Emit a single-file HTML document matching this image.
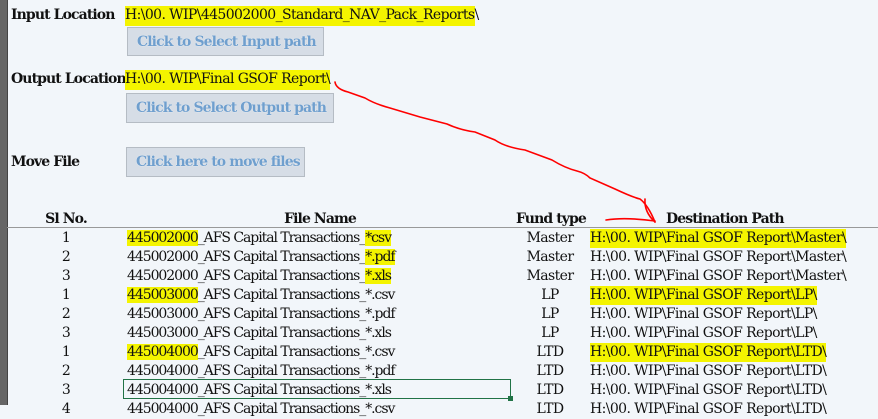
<!DOCTYPE html>
<html><head><meta charset="utf-8"><style>
body{margin:0;width:878px;height:405px;overflow:hidden;background:#f2f6fa;position:relative;font-family:"DejaVu Serif","Liberation Serif",serif;color:#111}
.a{position:absolute;white-space:nowrap;font-size:14px;line-height:19px;letter-spacing:-0.6px}
.b{font-weight:bold;letter-spacing:-0.9px}
.fn{letter-spacing:-1.05px}
.hl{background:#f4f400}
.btn{position:absolute;white-space:nowrap;overflow:hidden;background:#d6dde6;border:1px solid #b5bcc4;color:#6f9fce;font-weight:bold;font-size:14px;line-height:28px;padding-left:9px;box-sizing:border-box;letter-spacing:-0.9px;text-shadow:0 0 1px #fff}
.strip{position:absolute;left:0;top:0;width:7px;height:405px;background:#666;border-right:1px solid #444}
.c{text-align:center}
</style></head><body>
<div class="strip"></div>
<div class="a b" style="left:11px;top:6px">Input Location</div>
<div class="a hl" style="left:125px;top:6px;width:350px;height:20px">H:\00. WIP\445002000_Standard_NAV_Pack_Reports\</div>
<div class="btn" style="left:127px;top:27px;width:197px;height:29px">Click to Select Input path</div>
<div class="a b" style="left:11px;top:70px">Output Location</div>
<div class="a hl" style="left:125px;top:70px;width:205px;height:20px">H:\00. WIP\Final GSOF Report\</div>
<div class="btn" style="left:126px;top:93px;width:208px;height:30px">Click to Select Output path</div>
<div class="a b" style="left:11px;top:153px">Move File</div>
<div class="btn" style="left:126px;top:147px;width:179px;height:30px">Click here to move files</div>
<div style="position:absolute;left:7px;right:0;top:227px;height:1px;background:#999"></div>
<div class="a b c" style="left:20px;width:92px;top:210px">Sl No.</div>
<div class="a b c" style="left:230px;width:180px;top:210px">File Name</div>
<div class="a b" style="left:516px;top:210px">Fund type</div>
<div class="a b" style="left:666px;top:210px">Destination Path</div>
<div style="position:absolute;left:123px;top:379px;width:388px;height:20px;border:1px solid #217346;box-sizing:border-box"></div>
<div style="position:absolute;left:508px;top:396px;width:5px;height:5px;background:#217346"></div>
<div id="rows"></div>
<svg style="position:absolute;left:0;top:0" width="878" height="405"><g fill="none" stroke="#f00" stroke-width="1.6" stroke-linecap="round">
<path d="M335,82 Q336,89 348,92 L365,98 Q375,104 390,108 L420,117 L447,124 Q460,130 475,132 L495,140 Q505,147 525,150 L552,160 Q565,168 577,171 Q585,173 590,178 L615,189 Q632,197 640,199 Q648,205 655,222"/>
<path d="M606,220 Q625,217 655,221"/>
<path d="M645,199 Q644,212 655,222"/>
</g></svg>
<script>
var d=[["1","445002000","_AFS Capital Transactions_","*csv","Master","H:\\00. WIP\\Final GSOF Report\\Master\\",1,1],
["2","445002000","_AFS Capital Transactions_","*.pdf","Master","H:\\00. WIP\\Final GSOF Report\\Master\\",0,1],
["3","445002000","_AFS Capital Transactions_","*.xls","Master","H:\\00. WIP\\Final GSOF Report\\Master\\",0,1],
["1","445003000","_AFS Capital Transactions_","*.csv","LP","H:\\00. WIP\\Final GSOF Report\\LP\\",1,0],
["2","445003000","_AFS Capital Transactions_","*.pdf","LP","H:\\00. WIP\\Final GSOF Report\\LP\\",0,0],
["3","445003000","_AFS Capital Transactions_","*.xls","LP","H:\\00. WIP\\Final GSOF Report\\LP\\",0,0],
["1","445004000","_AFS Capital Transactions_","*.csv","LTD","H:\\00. WIP\\Final GSOF Report\\LTD\\",1,0],
["2","445004000","_AFS Capital Transactions_","*.pdf","LTD","H:\\00. WIP\\Final GSOF Report\\LTD\\",0,0],
["3","445004000","_AFS Capital Transactions_","*.xls","LTD","H:\\00. WIP\\Final GSOF Report\\LTD\\",0,0],
["4","445004000","_AFS Capital Transactions_","*.csv","LTD","H:\\00. WIP\\Final GSOF Report\\LTD\\",0,0]];
var h="";d.forEach(function(r,i){var t=229+i*19;var hi=(i==0||i==3||i==6);
h+='<div class="a c" style="left:20px;width:92px;top:'+t+'px">'+r[0]+'</div>';
h+='<div class="a fn" style="left:127px;top:'+t+'px"><span class="'+(r[6]?'hl':'')+'">'+r[1]+'</span>'+r[2]+'<span class="'+(r[7]?'hl':'')+'">'+r[3]+'</span></div>';
h+='<div class="a c" style="left:510px;width:80px;top:'+t+'px">'+r[4]+'</div>';
h+='<div class="a '+(hi?'hl':'')+'" style="left:590px;top:'+t+'px">'+r[5]+'</div>';});
document.getElementById("rows").innerHTML=h;
</script>
</body></html>
